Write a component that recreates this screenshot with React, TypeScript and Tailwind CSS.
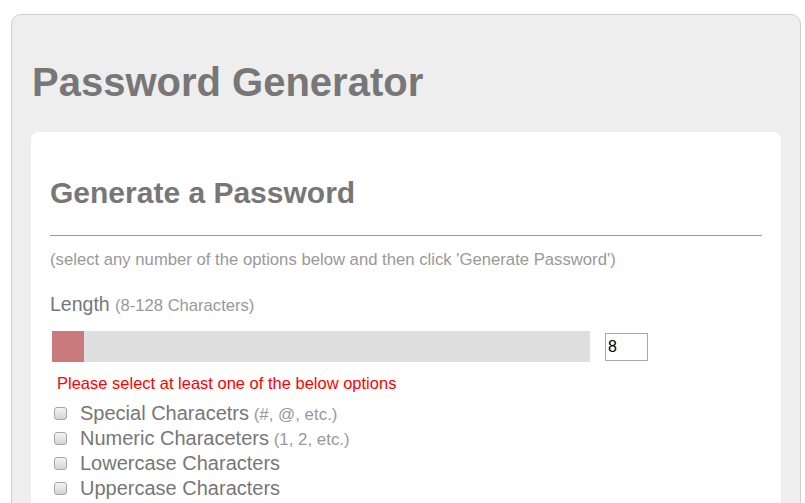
import React from "react";

const options = [
  { label: "Special Characetrs", note: "(#, @, etc.)" },
  { label: "Numeric Characeters", note: "(1, 2, etc.)" },
  { label: "Lowercase Characters", note: "" },
  { label: "Uppercase Characters", note: "" },
];

function Box() {
  return (
    <span className="inline-block w-[13px] h-[13px] shrink-0 rounded-[3px] border border-[#a6a6a6] bg-gradient-to-b from-[#f4f4f4] to-[#d4d4d4]" />
  );
}

export default function App() {
  return (
    <div className="min-h-[503px] bg-white overflow-hidden font-['Liberation_Sans',Arial,sans-serif]">
      <div className="ml-[11px] mt-[14px] w-[790px] border border-[#cfcfcf] rounded-[10px] bg-[#eeeeee] px-[19px] pt-[44px] pb-[40px]">
        <h1 className="text-[40px] leading-[46px] font-bold text-[#777777] ml-[1px]">
          Password Generator
        </h1>
        <div className="mt-[27px] bg-white rounded-[8px] px-[19px] pt-[44px] pb-[30px]">
          <h2 className="text-[30px] leading-[34px] font-bold text-[#777777]">
            Generate a Password
          </h2>
          <div className="mt-[25px] h-px bg-[#9a9a9a]" />
          <p className="mt-[15px] text-[16.7px] leading-[18px] text-[#999999] whitespace-nowrap">
            (select any number of the options below and then click 'Generate Password')
          </p>
          <div className="mt-[24px] text-[19.5px] leading-[23px] text-[#777777]">
            Length <span className="text-[16.6px] text-[#999999]">(8-128 Characters)</span>
          </div>
          <div className="mt-[14px] flex items-center">
            <div className="ml-[2px] w-[538px] h-[31px] bg-[#dfdfdf] flex">
              <div className="w-[32px] h-full bg-[#c97b7b]" />
            </div>
            <div className="ml-[15px] w-[43px] h-[28px] border border-[#a9a9a9] bg-white text-[16px] leading-[26px] text-black pl-[2px]">
              8
            </div>
          </div>
          <div className="mt-[12px] ml-[7px] text-[16.5px] leading-[19px] text-[#ff0000]">
            Please select at least one of the below options
          </div>
          <div className="mt-[8px] flex flex-col">
            {options.map((o) => (
              <div key={o.label} className="flex items-center h-[25px] ml-[4px]">
                <Box />
                <span className="ml-[13px] text-[20px] leading-[25px] text-[#777777] whitespace-nowrap">
                  {o.label}
                  {o.note && (
                    <span className="text-[16.9px] text-[#999999]"> {o.note}</span>
                  )}
                </span>
              </div>
            ))}
          </div>
        </div>
      </div>
    </div>
  );
}
